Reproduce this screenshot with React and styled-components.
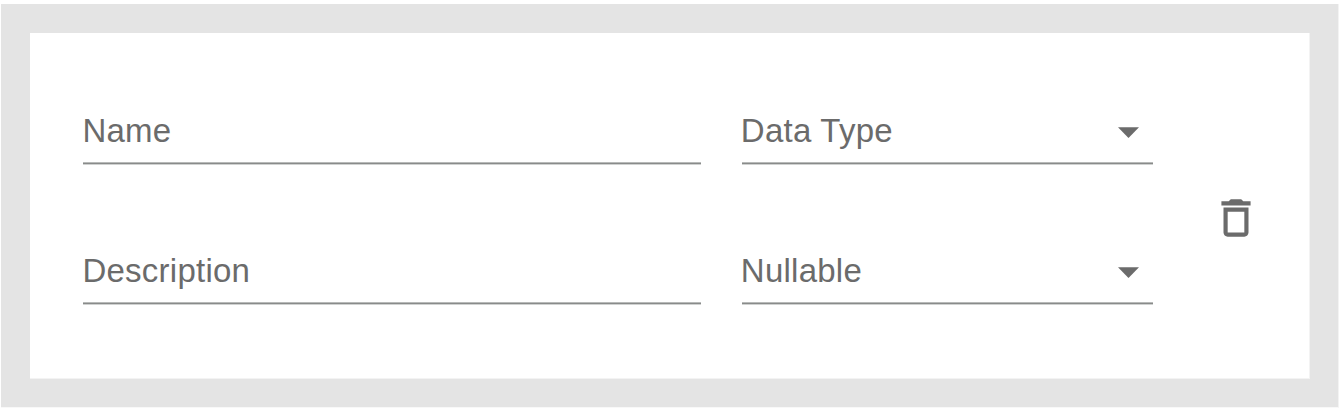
import React from 'react';
import styled, { createGlobalStyle } from 'styled-components';

const GlobalStyle = createGlobalStyle`
  *, *::before, *::after { box-sizing: border-box; }
  body { margin: 0; background: #fff; font-family: "Liberation Sans", Arial, sans-serif; }
`;

const Page = styled.main`
  display: flex;
  width: 1343px;
  height: 411px;
  padding: 4px 4px 3px 1px;
`;

const Frame = styled.section`
  display: flex;
  flex: 1;
  padding: 29px 28px 28px 29px;
  background: #e4e4e4;
  border-right: 1px solid #f3f3f3;
  border-bottom: 1px solid #f8f8f8;
`;

const Card = styled.form`
  display: flex;
  flex: 1;
  align-items: flex-start;
  padding: 72px 0 0 53px;
  background: #fff;
  border-right: 1px solid #f3f3f3;
  border-bottom: 1px solid #f3f3f3;
`;

const Fields = styled.div`
  display: grid;
  grid-template-columns: 618px 411px;
  grid-template-rows: 60px 60px;
  column-gap: 41px;
  row-gap: 80px;
`;

const Field = styled.div`
  display: flex;
  align-items: center;
  justify-content: space-between;
  height: 60px;
  padding: 0 14px 8px 0;
  background: linear-gradient(#b8bab9 0 1px, #898b8a 1px 2px, #d0d2d1 2px 3px) bottom / 100% 3px no-repeat;
`;

const Label = styled.label`
  margin-left: ${({ $shift = '-0.6px' }) => $shift};
  color: #6b6b6b;
  font-size: 33px;
  line-height: 40px;
  letter-spacing: 0.25px;
  white-space: nowrap;
`;

const Arrow = styled.svg`
  display: block;
  width: 21px;
  height: 11px;
  margin-top: 3px;
  fill: #6b6b6b;
`;

const DeleteButton = styled.button`
  width: 50px;
  height: 50px;
  margin: 88px 0 0 58px;
  padding: 0;
  border: 0;
  background: none;
  color: #6b6b6b;
`;

const TrashIcon = styled.svg`
  display: block;
  width: 50px;
  height: 50px;
  fill: currentColor;
`;

function SelectField({ label }) {
  return (
    <Field>
      <Label $shift="-1.2px">{label}</Label>
      <Arrow viewBox="0 0 21 11"><path d="M0 .3h21L10.5 10.9z" /></Arrow>
    </Field>
  );
}

export default function App() {
  return (
    <>
      <GlobalStyle />
      <Page>
        <Frame>
          <Card>
            <Fields>
              <Field><Label>Name</Label></Field>
              <SelectField label="Data Type" />
              <Field><Label>Description</Label></Field>
              <SelectField label="Nullable" />
            </Fields>
            <DeleteButton type="button" aria-label="Delete">
              <TrashIcon viewBox="0 0 24 24">
                <path d="M6 19c0 1.1.9 2 2 2h8c1.1 0 2-.9 2-2V7H6v12zM8 9h8v10H8V9zm7.5-5l-1-1h-5l-1 1H5v2h14V4h-3.5z" />
              </TrashIcon>
            </DeleteButton>
          </Card>
        </Frame>
      </Page>
    </>
  );
}
